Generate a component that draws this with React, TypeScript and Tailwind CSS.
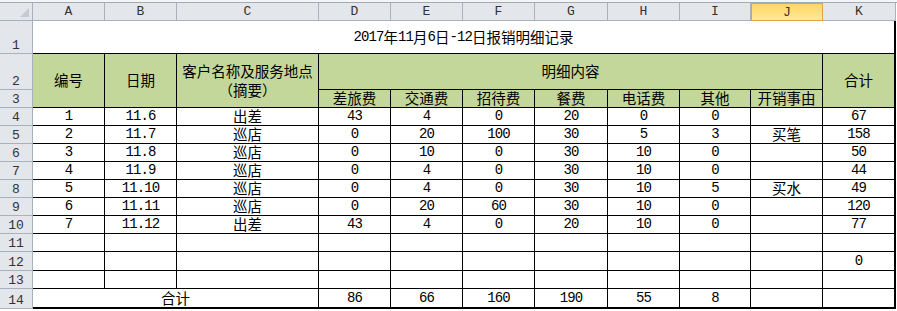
import React from 'react';

const cols = ['A', 'B', 'C', 'D', 'E', 'F', 'G', 'H', 'I', 'J', 'K'];

const rows: string[][] = [
  ['1', '11.6', '出差', '43', '4', '0', '20', '0', '0', '', '67'],
  ['2', '11.7', '巡店', '0', '20', '100', '30', '5', '3', '买笔', '158'],
  ['3', '11.8', '巡店', '0', '10', '0', '30', '10', '0', '', '50'],
  ['4', '11.9', '巡店', '0', '4', '0', '30', '10', '0', '', '44'],
  ['5', '11.10', '巡店', '0', '4', '0', '30', '10', '5', '买水', '49'],
  ['6', '11.11', '巡店', '0', '20', '60', '30', '10', '0', '', '120'],
  ['7', '11.12', '出差', '43', '4', '0', '20', '10', '0', '', '77'],
  ['', '', '', '', '', '', '', '', '', '', ''],
  ['', '', '', '', '', '', '', '', '', '', '0'],
  ['', '', '', '', '', '', '', '', '', '', ''],
];

const totals = ['86', '66', '160', '190', '55', '8', '', ''];

const subHeads = ['差旅费', '交通费', '招待费', '餐费', '电话费', '其他', '开销事由'];

// ascii runs get a narrow mono face, the rest the CJK face
function Txt({ s }: { s: string }) {
  const parts = s.split(/([\x00-\x7f]+)/).filter(Boolean);
  return (
    <>
      {parts.map((p, i) =>
        /^[\x00-\x7f]+$/.test(p) ? (
          <span key={i} className="font-['Liberation_Mono',monospace] text-[14px] tracking-[-0.9px]">
            {p}
          </span>
        ) : (
          <span key={i}>{p}</span>
        )
      )}
    </>
  );
}

function RowHead({ n }: { n: number }) {
  return (
    <div className="flex items-end justify-center pb-[1px] bg-[#e3e6eb] border-r border-b border-[#aab1bc] font-['Liberation_Mono',monospace] text-[13px] leading-none text-[#333]">
      {n}
    </div>
  );
}

export default function App() {
  return (
    <div className="w-[897px] h-[311px] bg-white overflow-hidden font-['Noto_Sans_CJK_SC',sans-serif] text-[14.5px] text-black leading-none">
      <div className="h-[3px] bg-[#f4f5f7] border-b border-[#a3aab5]" />
      <div className="grid grid-cols-[33px_72px_72px_142px_72px_72px_72px_73px_72px_71px_72px_73px] grid-rows-[18px_33px_36px_18px_18px_18px_18px_18px_18px_18px_18px_18px_19px_18px_20px]">
        {/* column headers */}
        <div className="relative bg-[#e3e6eb] border-r border-b border-[#aab1bc]">
          <div className="absolute right-[3px] bottom-[3px] w-0 h-0 border-l-[9px] border-l-transparent border-b-[9px] border-b-[#c5cad2]" />
        </div>
        {cols.map((c) =>
          c === 'J' ? (
            <div
              key={c}
              className="flex items-center justify-center bg-gradient-to-b from-[#fdd567] to-[#ffea92] border border-[#e1a443] font-['Liberation_Mono',monospace] text-[13px] text-[#333]"
            >
              {c}
            </div>
          ) : (
            <div
              key={c}
              className="flex items-center justify-center bg-[#e3e6eb] border-r border-b border-[#aab1bc] font-['Liberation_Mono',monospace] text-[13px] text-[#333]"
            >
              {c}
            </div>
          )
        )}

        {/* row 1: title */}
        <RowHead n={1} />
        <div className="col-span-11 flex items-center justify-center border-b border-r-2 border-black">
          <Txt s="2017年11月6日-12日报销明细记录" />
        </div>

        {/* rows 2-3: header block */}
        <RowHead n={2} />
        <div className="row-span-2 flex items-center justify-center bg-[#c4d79b] border-r border-b border-black">编号</div>
        <div className="row-span-2 flex items-center justify-center bg-[#c4d79b] border-r border-b border-black">日期</div>
        <div className="row-span-2 flex flex-col items-center justify-center gap-[4px] bg-[#c4d79b] border-r border-b border-black">
          <span>客户名称及服务地点</span>
          <span>（摘要）</span>
        </div>
        <div className="col-span-7 flex items-center justify-center bg-[#c4d79b] border-r border-b border-black">明细内容</div>
        <div className="row-span-2 flex items-center justify-center bg-[#c4d79b] border-r-2 border-b border-black">合计</div>
        <RowHead n={3} />
        {subHeads.map((h) => (
          <div key={h} className="flex items-center justify-center bg-[#c4d79b] border-r border-b border-black">
            {h}
          </div>
        ))}

        {/* rows 4-13 */}
        {rows.map((r, i) => (
          <React.Fragment key={i}>
            <RowHead n={i + 4} />
            {r.map((v, j) => (
              <div
                key={j}
                className={`flex items-end justify-center pb-[2px] border-b border-black ${
                  j === 10 ? 'border-r-2' : 'border-r'
                }`}
              >
                <Txt s={v} />
              </div>
            ))}
          </React.Fragment>
        ))}

        {/* row 14: totals */}
        <RowHead n={14} />
        <div className="col-span-3 flex items-end justify-center pb-[2px] border-r border-b-2 border-black">合计</div>
        {totals.map((v, j) => (
          <div
            key={j}
            className={`flex items-end justify-center pb-[2px] border-b-2 border-black ${
              j === 7 ? 'border-r-2' : 'border-r'
            }`}
          >
            <Txt s={v} />
          </div>
        ))}
      </div>
    </div>
  );
}
